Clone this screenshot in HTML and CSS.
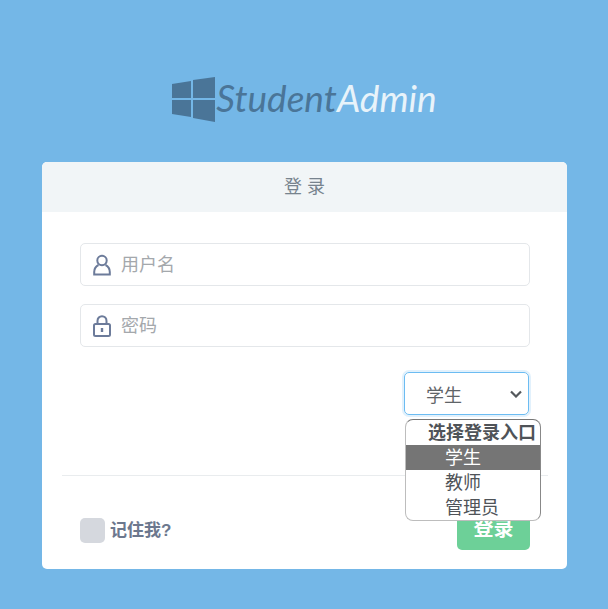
FILE: index.html
```html
<!DOCTYPE html>
<html lang="zh-CN">
<head>
    <meta charset="UTF-8">
    <meta name="viewport" content="width=device-width, initial-scale=1.0">
    <title>登录</title>
    <link rel="stylesheet" href="styles.css">
</head>
<body>
    <div class="logo">
        <svg class="logo-mark" width="44" height="46" viewBox="0 0 44 46">
            <polygon points="0,7 19,4 19,21 0,21" />
            <polygon points="21,3 43,0 43,21 21,21" />
            <polygon points="0,23 19,23 19,40 0,37" />
            <polygon points="21,23 43,23 43,45 21,41" />
        </svg>
        <span class="logo-text"><span class="logo-dark">Student</span><span class="logo-light">Admin</span></span>
    </div>

    <div class="card">
        <div class="card-header">登 录</div>
        <form class="card-body">
            <div class="field">
                <svg class="field-icon" width="18" height="22" viewBox="0 0 18 22">
                    <circle cx="9" cy="6.5" r="4.7" />
                    <path d="M5.5 11 C2.5 12.5 1.2 15 1.2 18 V20.5 H16.8 V18 C16.8 15 15.5 12.5 12.5 11" />
                </svg>
                <span class="placeholder">用户名</span>
            </div>
            <div class="field">
                <svg class="field-icon" width="18" height="22" viewBox="0 0 18 22">
                    <rect x="1" y="9" width="16" height="12" rx="1.5" />
                    <path d="M4.5 9 V6 C4.5 3.2 6.5 1.2 9 1.2 C11.5 1.2 13.5 3.2 13.5 6 V9" />
                    <path class="keyhole" d="M9 13 V17" />
                </svg>
                <span class="placeholder">密码</span>
            </div>

            <div class="role-row">
                <div class="role-select">
                    <span>学生</span>
                    <svg width="12" height="8" viewBox="0 0 12 8"><path d="M1 1.5 L6 6.5 L11 1.5" /></svg>
                </div>
            </div>

            <ul class="role-menu">
                <li class="role-group">选择登录入口</li>
                <li class="role-option selected">学生</li>
                <li class="role-option">教师</li>
                <li class="role-option">管理员</li>
            </ul>

            <hr class="divider">

            <div class="card-footer">
                <label class="remember"><span class="checkbox"></span>记住我?</label>
                <button type="button" class="btn-login">登录</button>
            </div>
        </form>
    </div>
</body>
</html>
```

FILE: styles.css
```css
* {
    margin: 0;
    padding: 0;
    box-sizing: border-box;
}

body {
    font-family: "Liberation Sans", "Noto Sans CJK SC", sans-serif;
    background-color: #74b7e7;
    height: 609px;
    overflow: hidden;
}

.logo {
    display: flex;
    align-items: center;
    justify-content: center;
    height: 162px;
    padding: 34px 0 0 1px;
}

.logo-mark {
    fill: #4a7598;
    margin-top: 4px;
}

.logo-text {
    font-family: "Lato", sans-serif;
    font-style: italic;
    font-size: 37px;
    line-height: 44px;
}

.logo-dark {
    color: #4a7598;
}

.logo-light {
    color: #e8f3fa;
}

.card {
    width: 525px;
    height: 407px;
    margin-left: 42px;
    background: #fff;
    border-radius: 5px;
}

.card-header {
    height: 50px;
    line-height: 50px;
    text-align: center;
    font-size: 18px;
    color: #77838e;
    background: #f1f5f7;
    border-radius: 5px 5px 0 0;
}

.card-body {
    position: relative;
    padding: 31px 37px 0 38px;
}

.field {
    display: flex;
    align-items: center;
    gap: 10px;
    height: 43px;
    margin-bottom: 18px;
    padding-left: 12px;
    border: 1px solid #e4e7ea;
    border-radius: 5px;
}

.field-icon {
    fill: none;
    stroke: #6c7b9a;
    stroke-width: 2;
}

.keyhole {
    stroke-width: 2.4;
}

.placeholder {
    font-size: 18px;
    line-height: 22px;
    color: #a4a8ac;
}

.role-row {
    display: flex;
    justify-content: flex-end;
    padding: 7px 1px 0 0;
}

.role-select {
    display: flex;
    align-items: center;
    justify-content: space-between;
    width: 125px;
    height: 43px;
    padding: 0 6px 0 21px;
    font-size: 18px;
    color: #5f6468;
    border: 1px solid #6cbcf2;
    border-radius: 5px;
    box-shadow: 0 0 0 2px #e2f1fc;
}

.role-select svg {
    fill: none;
    stroke: #54585c;
    stroke-width: 2.2;
}

/* open dropdown sits over the divider and the button */
.role-menu {
    position: absolute;
    left: 363px;
    top: 207px;
    width: 136px;
    height: 102px;
    list-style: none;
    font-size: 18px;
    line-height: 23px;
    color: #4f5358;
    background: #fff;
    border: 1px solid #bdbdbd;
    border-top-color: #777;
    border-right-color: #888;
    border-radius: 8px;
    overflow: hidden;
    z-index: 2;
}

.role-group {
    padding: 2px 0 0 22px;
    font-weight: bold;
    white-space: nowrap;
}

.role-option {
    padding: 2px 0 0 39px;
}

.role-option.selected {
    color: #fff;
    background: #757575;
}

.divider {
    margin: 60px -18px 0 -18px;
    border: none;
    border-top: 1px solid #e9ecee;
}

.card-footer {
    display: flex;
    justify-content: space-between;
    align-items: flex-end;
    padding-top: 32px;
}

.remember {
    display: flex;
    align-items: center;
    gap: 5px;
    margin-bottom: 7px;
    font-size: 17px;
    line-height: 22px;
    font-weight: bold;
    color: #6c788e;
}

.checkbox {
    width: 25px;
    height: 25px;
    background: #d5d8de;
    border-radius: 5px;
}

.btn-login {
    width: 73px;
    height: 42px;
    padding-bottom: 3px;
    font-family: inherit;
    font-size: 20px;
    font-weight: bold;
    color: #fff;
    background: #6dd098;
    border: none;
    border-radius: 5px;
}
```
